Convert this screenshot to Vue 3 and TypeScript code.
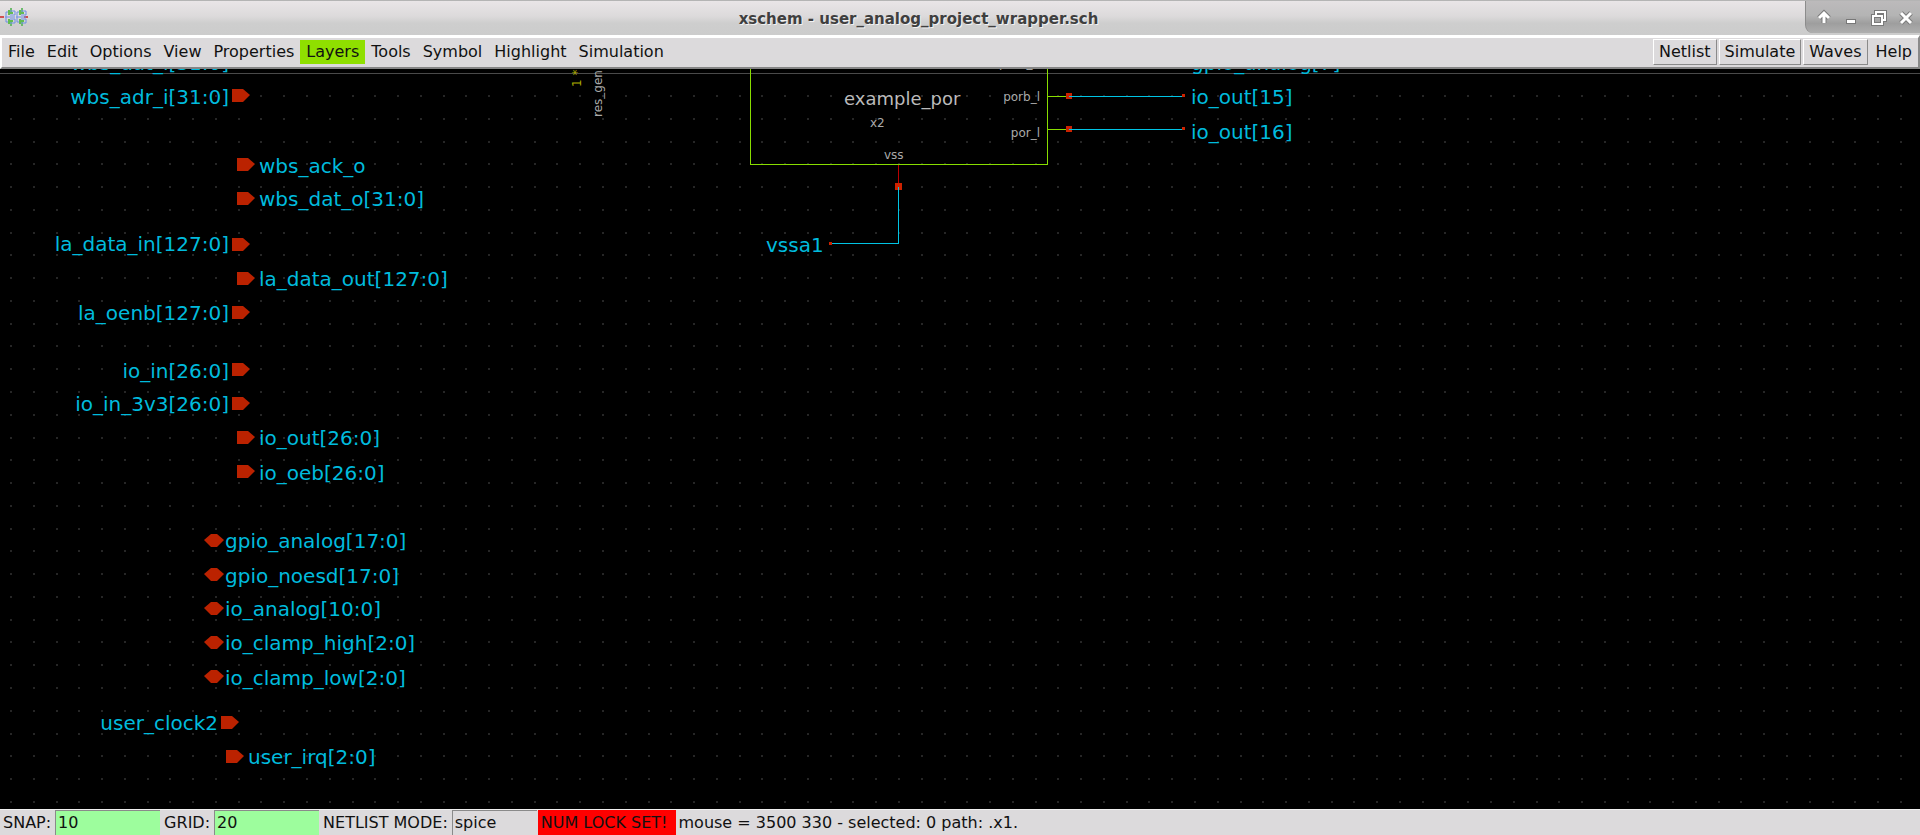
<script setup lang="ts">
import { ref } from 'vue'

type PinKind = 'in' | 'out' | 'inout'

interface Pin {
  name: string
  kind: PinKind
  x: number
  y: number
  base: number
}

interface Wire {
  name: string
  y: number
  base: number
}

const menus: string[] = [
  'File', 'Edit', 'Options', 'View', 'Properties',
  'Layers', 'Tools', 'Symbol', 'Highlight', 'Simulation',
]
const actions: string[] = ['Netlist', 'Simulate', 'Waves']

const snap = ref('10')
const grid = ref('20')
const netlistMode = ref('spice')

// Vertical scroll of the schematic inside the drawing area
const scrollY = 69

const pins: Pin[] = [
  { name: 'wbs_dat_i[31:0]', kind: 'in', x: 232, y: 61, base: 70 },
  { name: 'wbs_adr_i[31:0]', kind: 'in', x: 232, y: 95, base: 104 },
  { name: 'wbs_ack_o', kind: 'out', x: 237, y: 164, base: 173 },
  { name: 'wbs_dat_o[31:0]', kind: 'out', x: 237, y: 198, base: 206 },
  { name: 'la_data_in[127:0]', kind: 'in', x: 232, y: 244, base: 251 },
  { name: 'la_data_out[127:0]', kind: 'out', x: 237, y: 278, base: 286 },
  { name: 'la_oenb[127:0]', kind: 'in', x: 232, y: 312, base: 320 },
  { name: 'io_in[26:0]', kind: 'in', x: 232, y: 369, base: 378 },
  { name: 'io_in_3v3[26:0]', kind: 'in', x: 232, y: 403, base: 411 },
  { name: 'io_out[26:0]', kind: 'out', x: 237, y: 437, base: 445 },
  { name: 'io_oeb[26:0]', kind: 'out', x: 237, y: 471, base: 480 },
  { name: 'gpio_analog[17:0]', kind: 'inout', x: 204, y: 540, base: 548 },
  { name: 'gpio_noesd[17:0]', kind: 'inout', x: 204, y: 574, base: 583 },
  { name: 'io_analog[10:0]', kind: 'inout', x: 204, y: 608, base: 616 },
  { name: 'io_clamp_high[2:0]', kind: 'inout', x: 204, y: 642, base: 650 },
  { name: 'io_clamp_low[2:0]', kind: 'inout', x: 204, y: 676, base: 685 },
  { name: 'user_clock2', kind: 'in', x: 221, y: 722, base: 730 },
  { name: 'user_irq[2:0]', kind: 'out', x: 226, y: 756, base: 764 },
]

const wires: Wire[] = [
  { name: 'io_out[15]', y: 96, base: 104 },
  { name: 'io_out[16]', y: 129, base: 139 },
]

const labelOffset: Record<PinKind, number> = { in: -3, out: 22, inout: 21 }

function pinPath(pin: Pin): string {
  return pin.kind === 'inout'
    ? `M${pin.x} ${pin.y} l7 -6 h6 l7 6 l-7 7 h-6z`
    : `M${pin.x} ${pin.y - 6} h11 l7 6 l-7 7 h-11z`
}

// 13 grid steps span one 296px tile, each dot snapped to a whole pixel
const tile = 296
const steps = 13
const stops = Array.from({ length: steps }, (_, i) => Math.round((i * tile) / steps))
const dotPath = stops.map((y) => stops.map((x) => `M${x} ${y}h2v2h-2z`).join('')).join('')
</script>

<template>
  <div class="window">
    <header class="titlebar">
      <svg class="logo" width="28" height="22" viewBox="0 0 28 22" aria-hidden="true">
        <g fill="none">
          <path d="M0 11h4M24 11h4" stroke="#d05050" stroke-width="2" />
          <g v-for="dx in [0, 11]" :key="dx" :transform="`translate(${dx} 0)`">
            <path d="M11 2v5M11 15v5" stroke="#6cbb6c" stroke-width="2" />
            <path d="M5 11h10M8 6h-2v10h2M9 5h6v4h-5M9 17h6v-4h-5" stroke="#6f90e6" stroke-width="1" />
            <path d="M9 4v5M9 13v5M9 7h4M9 15h4" stroke="#62bb52" stroke-width="2" />
          </g>
        </g>
      </svg>
      <h1 class="title">xschem - user_analog_project_wrapper.sch</h1>
      <div class="controls">
        <button class="control" type="button" aria-label="Shade">
          <svg width="20" height="20" viewBox="0 0 20 20">
            <path d="M10 15V6M5 10l5-5 5 5" class="edge" />
            <path d="M10 15V6M5 10l5-5 5 5" class="glyph" />
          </svg>
        </button>
        <button class="control" type="button" aria-label="Minimize">
          <svg width="20" height="20" viewBox="0 0 20 20">
            <rect x="5" y="11" width="10" height="5" fill="#777" />
            <rect x="6" y="12" width="8" height="3" fill="#fff" />
          </svg>
        </button>
        <button class="control" type="button" aria-label="Restore">
          <svg width="20" height="20" viewBox="0 0 20 20">
            <path d="M7 7V4h9v8h-3M4 8h9v8h-9z" class="edge square" />
            <path d="M7 7V4h9v8h-3M4 8h9v8h-9z" class="glyph square" />
          </svg>
        </button>
        <button class="control" type="button" aria-label="Close">
          <svg width="20" height="20" viewBox="0 0 20 20">
            <path d="M5 5l10 10M15 5L5 15" class="edge" />
            <path d="M5 5l10 10M15 5L5 15" class="glyph" />
          </svg>
        </button>
      </div>
    </header>

    <nav class="menubar">
      <button
        v-for="menu in menus"
        :key="menu"
        type="button"
        class="menu"
        :class="{ active: menu === 'Layers' }"
      >{{ menu }}</button>
      <div class="actions">
        <button v-for="action in actions" :key="action" type="button" class="action">{{ action }}</button>
        <button type="button" class="menu">Help</button>
      </div>
    </nav>

    <main class="canvas">
      <svg class="schematic" width="100%" height="100%">
        <defs>
          <pattern id="grid-dots" x="10" y="95" :width="tile" :height="tile" patternUnits="userSpaceOnUse">
            <path :d="dotPath" fill="#262626" />
          </pattern>
        </defs>
        <g :transform="`translate(0 ${-scrollY})`">
          <rect x="0" y="76" width="100%" height="100%" fill="url(#grid-dots)" />
          <rect x="0" y="73" width="100%" height="1" fill="#4a4a4a" />

          <g v-for="pin in pins" :key="pin.name">
            <path :d="pinPath(pin)" fill="#bb2200" />
            <text
              class="net"
              :x="pin.x + labelOffset[pin.kind]"
              :y="pin.base"
              :text-anchor="pin.kind === 'in' ? 'end' : 'start'"
            >{{ pin.name }}</text>
          </g>

          <text class="small index" transform="translate(581 87) rotate(-90)">1 *</text>
          <text class="small" transform="translate(602 117) rotate(-90)">res_gen</text>

          <path class="outline" d="M750 60V164H1047V60" />
          <path class="outline" d="M1047 96H1066M1047 129H1066" />
          <path class="stub" d="M898 165V186" />
          <rect class="node" x="895" y="183" width="7" height="7" />
          <path class="wire" d="M898 187V243H832" />
          <rect class="node" x="829" y="242" width="3" height="3" />

          <text class="block-name" x="844" y="105">example_por</text>
          <text class="small" x="870" y="127">x2</text>
          <text class="small" x="884" y="159">vss</text>
          <text class="small" x="1040" y="67" text-anchor="end">porb_h</text>
          <text class="small" x="1040" y="101" text-anchor="end">porb_l</text>
          <text class="small" x="1040" y="137" text-anchor="end">por_l</text>

          <text class="net" x="1191" y="70">gpio_analog[7]</text>
          <g v-for="wire in wires" :key="wire.name">
            <rect class="node" x="1066" :y="wire.y - 3" width="6" height="6" />
            <path class="wire" :d="`M1069 ${wire.y}H1182`" />
            <rect class="node" x="1182" :y="wire.y - 2" width="3" height="3" />
            <text class="net" x="1191" :y="wire.base">{{ wire.name }}</text>
          </g>
          <text class="net" x="766" y="252">vssa1</text>
        </g>
      </svg>
    </main>

    <footer class="statusbar">
      <label for="snap">SNAP:</label>
      <input id="snap" v-model="snap" class="field green" type="text" />
      <label for="grid">GRID:</label>
      <input id="grid" v-model="grid" class="field green" type="text" />
      <label for="mode">NETLIST MODE:</label>
      <input id="mode" v-model="netlistMode" class="field mode" type="text" />
      <strong class="warning">NUM LOCK SET!</strong>
      <output class="message">mouse = 3500 330 - selected: 0 path: .x1.</output>
    </footer>
  </div>
</template>

<style>
body {
  margin: 0;
  background: #000;
}
</style>

<style scoped>
.window {
  display: flex;
  flex-direction: column;
  height: 100vh;
  overflow: hidden;
  font: 16px/20px 'DejaVu Sans', sans-serif;
  color: #111;
  background: #000;
}

button,
input {
  font: inherit;
  color: inherit;
  margin: 0;
  border-radius: 0;
}

.titlebar {
  display: grid;
  grid-template-columns: 32px 1fr 115px;
  flex: none;
  height: 35px;
  box-sizing: border-box;
  border-top: 1px solid #b4b4b4;
  background: linear-gradient(#e9e5e7, #dcdadb 45%, #cecece 65%, #cccccc);
}

.logo {
  margin-top: 5px;
}

.title {
  margin: 0;
  text-align: center;
  font-size: 15px;
  line-height: 36px;
  font-weight: bold;
  color: #3f3f3f;
  text-shadow: 1px 1px 0 #f2f2f2;
  white-space: nowrap;
}

.controls {
  display: flex;
  align-items: center;
  justify-content: space-between;
  height: 32px;
  box-sizing: border-box;
  padding: 2px 4px 0 8px;
  border-left: 1px solid #8c8c8c;
  border-bottom-left-radius: 8px;
  background: linear-gradient(#bcbabb, #b4b4b4 45%, #9e9e9e 70%, #aeaeae);
}

.control {
  display: flex;
  padding: 0;
  border: 0;
  background: none;
}

.edge,
.glyph {
  fill: none;
  stroke: #7a7a7a;
  stroke-width: 5;
}

.glyph {
  stroke: #fff;
  stroke-width: 3;
}

.edge.square {
  stroke-width: 4;
}

.glyph.square {
  stroke-width: 2;
}

.menubar {
  display: flex;
  align-items: center;
  flex: none;
  height: 34px;
  box-sizing: border-box;
  padding-bottom: 1px;
  border-style: solid;
  border-width: 3px 2px 2px 2px;
  border-color: #fff #8a8a8a #858585 #fff;
  background: #dcdadc;
}

.menu {
  height: 24px;
  padding: 0 6px;
  border: 0;
  background: none;
  white-space: nowrap;
}

.active {
  background: #8fdf00;
}

.actions {
  display: flex;
  align-items: center;
  gap: 2px;
  margin-left: auto;
}

.action {
  height: 26px;
  padding: 0 5px;
  border: 1px solid;
  border-color: #fff #8a8a8a #8a8a8a #fff;
  background: #dcdadc;
  white-space: nowrap;
}

.canvas {
  flex: 1;
  min-height: 0;
  overflow: hidden;
  background: #000;
}

.schematic {
  display: block;
}

.net {
  font-size: 20px;
  fill: #00bbdd;
}

.block-name {
  font-size: 18px;
  fill: #bbbbbb;
}

.small {
  font-size: 12px;
  fill: #aaaaaa;
}

.index {
  fill: #aaaa00;
}

.outline,
.wire,
.stub {
  fill: none;
  stroke-width: 1;
  stroke: #88dd00;
  shape-rendering: crispEdges;
}

.wire {
  stroke: #00c4e4;
}

.stub {
  stroke: #bb0000;
}

.node {
  fill: #cc2200;
}

.statusbar {
  display: flex;
  align-items: stretch;
  flex: none;
  height: 26px;
  box-sizing: border-box;
  padding-top: 1px;
  line-height: 26px;
  background: #dcdadc;
  box-shadow: inset 0 1px #f0f0f0;
  white-space: nowrap;
}

.statusbar label {
  padding: 0 4px 0 3px;
}

.field {
  box-sizing: border-box;
  width: 105px;
  min-width: 0;
  margin-right: 1px;
  padding: 0 2px;
  border: 0;
  border-top: 1px solid #8a8a8a;
  border-left: 1px solid #8a8a8a;
  outline: 0;
  background: #dcdadc;
}

.green {
  background: #9dfd9d;
}

.mode {
  width: 85px;
}

.warning {
  padding: 0 8px 0 3px;
  font-weight: normal;
  background: #f00;
}

.message {
  padding-left: 3px;
}
</style>
